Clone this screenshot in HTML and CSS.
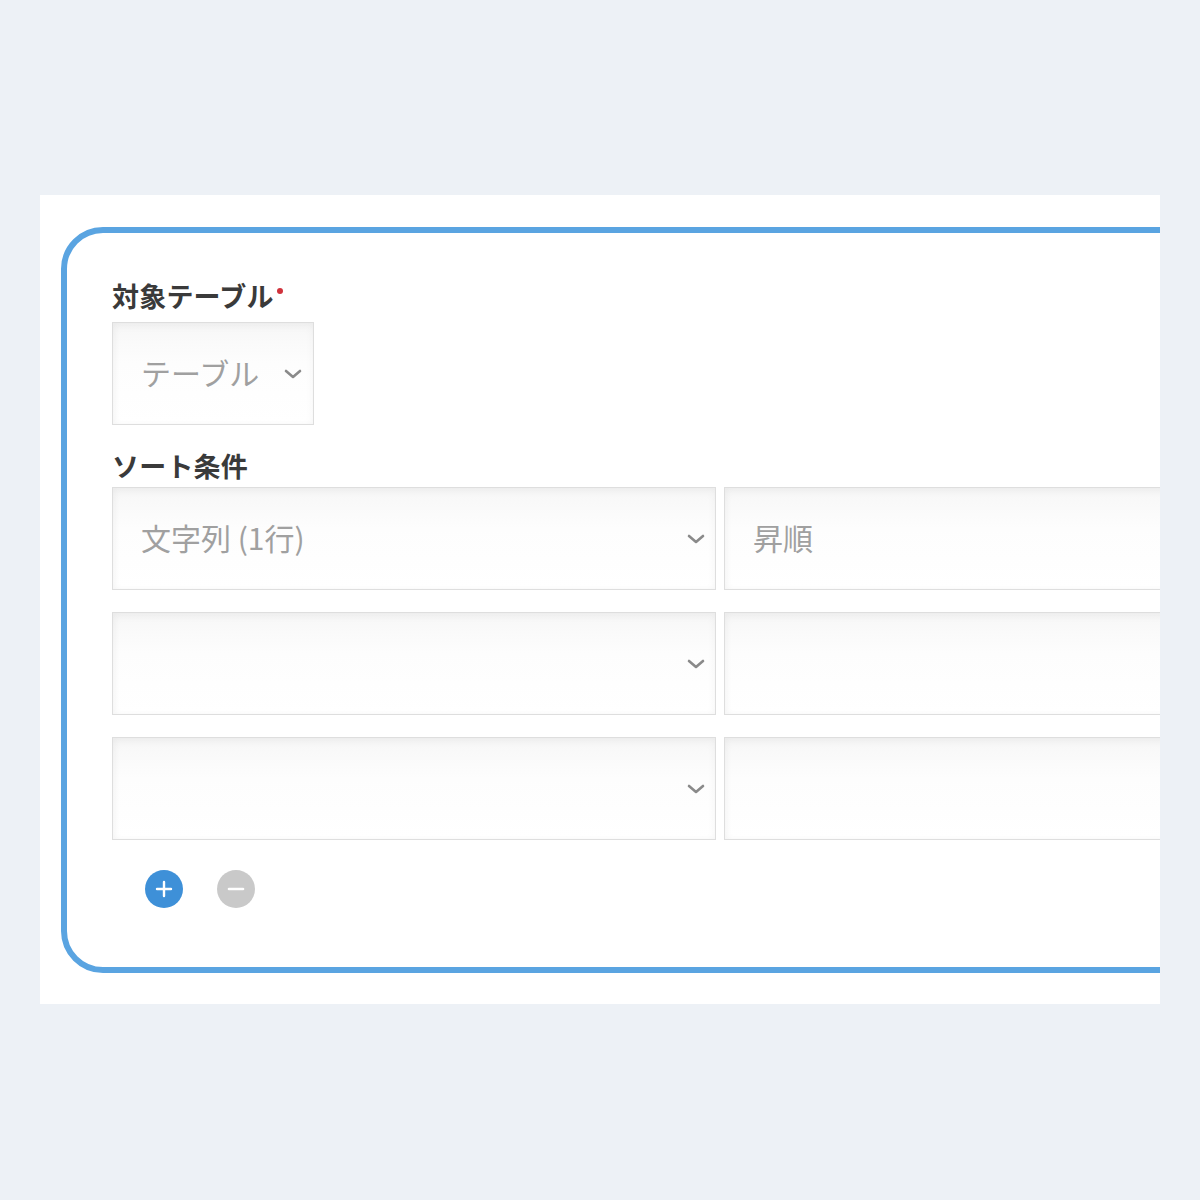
FILE: index.html
```html
<!DOCTYPE html>
<html lang="ja">
<head>
<meta charset="utf-8">
<link rel="stylesheet" href="styles.css">
</head>
<body>
<div class="panel">
  <div class="card">
    <div class="label">対象テーブル<span class="req"></span></div>
    <div class="select small">
      <span class="ph">テーブル</span>
      <svg class="chev" viewBox="0 0 20 12" width="20" height="12"><path d="M3 3 L10 9 L17 3" fill="none" stroke="#8a8a8a" stroke-width="2.6" stroke-linecap="round" stroke-linejoin="round"/></svg>
    </div>
    <div class="label sort">ソート条件</div>
    <div class="rows">
      <div class="row">
        <div class="select wide">
          <span class="ph">文字列 (1行)</span>
          <svg class="chev" viewBox="0 0 20 12" width="20" height="12"><path d="M3 3 L10 9 L17 3" fill="none" stroke="#8a8a8a" stroke-width="2.6" stroke-linecap="round" stroke-linejoin="round"/></svg>
        </div>
        <div class="select order"><span class="ph">昇順</span></div>
      </div>
      <div class="row">
        <div class="select wide">
          <span class="ph"></span>
          <svg class="chev" viewBox="0 0 20 12" width="20" height="12"><path d="M3 3 L10 9 L17 3" fill="none" stroke="#8a8a8a" stroke-width="2.6" stroke-linecap="round" stroke-linejoin="round"/></svg>
        </div>
        <div class="select order"></div>
      </div>
      <div class="row">
        <div class="select wide">
          <span class="ph"></span>
          <svg class="chev" viewBox="0 0 20 12" width="20" height="12"><path d="M3 3 L10 9 L17 3" fill="none" stroke="#8a8a8a" stroke-width="2.6" stroke-linecap="round" stroke-linejoin="round"/></svg>
        </div>
        <div class="select order"></div>
      </div>
    </div>
    <div class="btns">
      <span class="circ plus"><svg viewBox="0 0 38 38" width="38" height="38"><path d="M19 12 V26 M12 19 H26" stroke="#fff" stroke-width="2.4" stroke-linecap="round"/></svg></span>
      <span class="circ minus"><svg viewBox="0 0 38 38" width="38" height="38"><path d="M12 19 H26" stroke="#fff" stroke-width="2.6" stroke-linecap="round"/></svg></span>
    </div>
  </div>
</div>
</body>
</html>
```
FILE: styles.css
```css
html, body {
  margin: 0;
  padding: 0;
  background: #edf1f6;
}
body {
  width: 1200px;
  height: 1200px;
  padding-top: 195px;
  box-sizing: border-box;
  font-family: "Noto Sans CJK JP", "Noto Sans", sans-serif;
}
.panel {
  margin-left: 40px;
  width: 1120px;
  height: 809px;
  background: #fff;
  overflow: hidden;
  padding: 32px 0 0 21px;
  box-sizing: border-box;
}
.card {
  width: 1260px;
  height: 746px;
  box-sizing: border-box;
  border: 6px solid #5aa4e1;
  border-radius: 42px;
  padding: 46px 0 0 45px;
}
.label {
  font-size: 27px;
  font-weight: 700;
  color: #3a3a3a;
  line-height: 34px;
  height: 34px;
  display: flex;
  align-items: flex-start;
  letter-spacing: 0.2px;
}
.req {
  width: 6px;
  height: 6px;
  border-radius: 50%;
  background: #d0323c;
  margin-left: 3px;
  margin-top: 9px;
}
.select {
  box-sizing: border-box;
  height: 103px;
  border: 1px solid #dedede;
  background: linear-gradient(#f7f7f7, #fdfdfd 40%, #ffffff);
  box-shadow: inset 0 3px 8px rgba(0,0,0,0.045), inset 2px 0 6px rgba(0,0,0,0.02);
  display: flex;
  align-items: center;
  padding-left: 28px;
  padding-right: 9px;
  position: relative;
}
.select.small {
  margin-top: 9px;
  width: 202px;
  padding-right: 10px;
}
.ph {
  font-size: 30px;
  color: #a0a0a0;
  flex: 1;
  line-height: 36px;
  margin-top: -4px;
}
.chev {
  flex: none;
}
.label.sort {
  margin-top: 24px;
}
.rows {
  margin-top: 4px;
  display: flex;
  flex-direction: column;
  gap: 22px;
}
.row {
  display: flex;
  gap: 8px;
}
.select.wide {
  width: 604px;
}
.select.order {
  width: 500px;
  padding-left: 28px;
}
.btns {
  margin-top: 30px;
  margin-left: 33px;
  display: flex;
  gap: 34px;
}
.circ {
  width: 38px;
  height: 38px;
  border-radius: 50%;
  display: block;
}
.circ svg { display: block; }
.plus { background: #3e90d8; }
.minus { background: #c9c9c9; }
```
